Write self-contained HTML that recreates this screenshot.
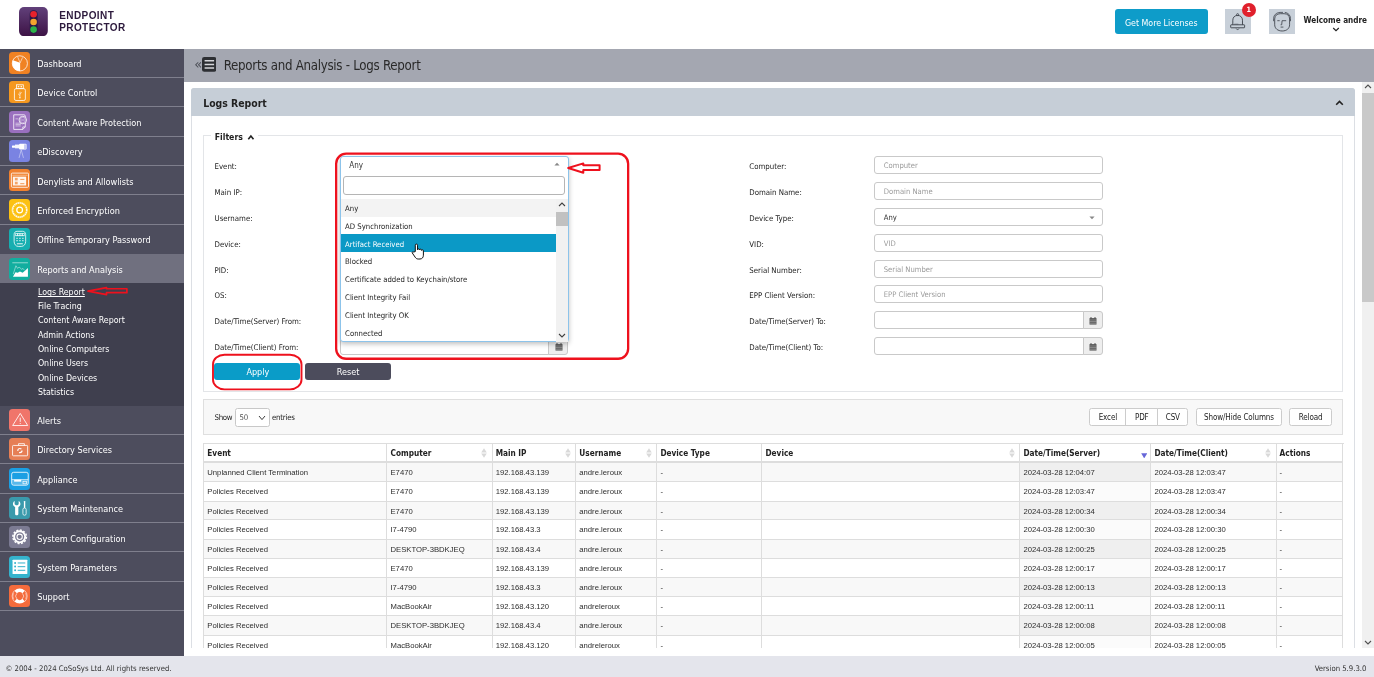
<!DOCTYPE html>
<html lang="en"><head><meta charset="utf-8"><title>Endpoint Protector - Reports and Analysis - Logs Report</title>
<style>
*{box-sizing:border-box;margin:0;padding:0}
html,body{width:1374px;height:677px;overflow:hidden;background:#fff}
body{position:relative;font-family:"DejaVu Sans Condensed","Liberation Sans",sans-serif;font-size:8px;color:#222;line-height:1}
.a{position:absolute}
.t{position:absolute;white-space:nowrap}
#hdr{left:0;top:0;width:1374px;height:48.5px;background:#fff}
#sb{left:0;top:48.5px;width:184px;height:607.2px;background:#4d4d5d;overflow:hidden}
.mi{position:absolute;left:0;width:184px;height:29.39px;border-bottom:1px solid #7f7f8d}
.mi.act{background:#70707f;border-bottom:0}
.mi.nb{border-bottom-color:#4d4d5d}
.mi svg{position:absolute;left:8.5px;top:3.4px;width:21.7px;height:22px;border-radius:3.5px}
.mi span{position:absolute;left:37.2px;top:11.6px;font-size:9.1px;color:#fff;white-space:nowrap}
#sub{position:absolute;left:0;top:283px;width:184px;height:122.5px;background:#3f3f4e}
#sub div{position:absolute;left:37.9px;font-size:8.8px;color:#fff;white-space:nowrap}
#tb{left:184px;top:48.5px;width:1190px;height:33.5px;background:#a4a7b1}
#ft{left:0;top:655.7px;width:1374px;height:21.3px;background:#e4e5ec}
#scr{left:1362px;top:82px;width:12px;height:566.3px;background:#f0f0f0}
#panel{left:191px;top:88.3px;width:1164.4px;height:580px;border:1px solid #dcdfe4;border-radius:3px 3px 0 0;background:#fff}
#ph{left:191px;top:88.3px;width:1164.4px;height:27.7px;background:#c6ced7;border-radius:3px 3px 0 0}
#fs{left:203px;top:135.3px;width:1140px;height:257px;border:1px solid #e3e5e8}
.lb{position:absolute;font-size:7.8px;color:#222;white-space:nowrap}
.in{position:absolute;height:18px;border:1px solid #c9c9c9;border-radius:3px;background:#fff;font-size:7.6px;color:#9a9a9a;padding:5px 0 0 8.4px;white-space:nowrap}
.addon{position:absolute;width:19.4px;height:18px;border:1px solid #c9c9c9;border-radius:0 3px 3px 0;background:#eee}
.btn{position:absolute;border:1px solid #ccc;background:#fff;font-size:8px;letter-spacing:-.12px;color:#222;text-align:center;height:18.4px;padding-top:5px;white-space:nowrap}
#tbl{left:203.3px;top:443px;width:1140.4px;height:205.3px;overflow:hidden;border-left:1px solid #ddd;border-top:1px solid #ddd}
.row{position:absolute;left:0;width:1139px;height:19.2px;border-bottom:1px solid #ddd}
.row i{font-family:"Liberation Sans",sans-serif;position:absolute;top:0;height:100%;border-right:1px solid #ddd;font-style:normal;font-size:7.7px;color:#2c2c2c;padding:6.2px 0 0 3px;white-space:nowrap;overflow:hidden}
.row.h i{font-family:"DejaVu Sans Condensed","Liberation Sans",sans-serif;font-weight:bold;font-size:8.2px;color:#222;padding-top:5.4px}
.row.o{background:#f8f8f8}
.opt{position:absolute;left:0;width:215.5px;height:17.9px;font-size:7.7px;color:#222;padding:6.1px 0 0 4.2px;white-space:nowrap}
#wrap{position:absolute;left:0;top:0;width:1374px;height:677px;overflow:hidden;will-change:transform}
</style></head><body><div id="wrap">

<div class="a" id="hdr">
<svg class="a" style="left:19.1px;top:6.8px" width="28.8" height="29.1" viewBox="0 0 28.8 29.1"><defs><linearGradient id="lg" x1="0" y1="0" x2="0" y2="1"><stop offset="0" stop-color="#61407a"/><stop offset="1" stop-color="#3d1345"/></linearGradient></defs><rect width="28.8" height="29.1" rx="5" fill="url(#lg)"/><rect x="10.7" y="3.2" width="7.9" height="23.1" rx="3.9" fill="#2a1848"/><circle cx="14.6" cy="7.3" r="3.3" fill="#e8222c"/><circle cx="14.6" cy="15" r="3.3" fill="#f5a52e"/><circle cx="14.6" cy="22.6" r="3.3" fill="#2db34a"/></svg>
<div class="t" style="left:59.2px;top:10.2px;font-family:'Liberation Sans',sans-serif;font-weight:bold;font-size:10px;letter-spacing:.42px;line-height:11.9px;color:#2d1a3d">ENDPOINT<br>PROTECTOR</div>
<div class="a" style="left:1114.5px;top:9.2px;width:93.5px;height:25.2px;background:#0e9cc9;border-radius:3px;color:#fff;font-size:8.8px;text-align:center;padding-top:9.6px">Get More Licenses</div>
<div class="a" style="left:1225px;top:8.7px;width:25.8px;height:25.2px;background:#c8d0d9"></div>
<svg class="a" style="left:1225px;top:8.7px" width="25.8" height="25.2" viewBox="0 0 25.8 25.2"><path d="M7.8 15.8v-4.6c0-2.9 2-4.8 4.8-4.8s4.9 1.9 4.9 4.8v4.6" fill="none" stroke="#3a3f47" stroke-width=".9"/><rect x="5.7" y="15.8" width="13.9" height="3" rx=".5" fill="none" stroke="#3a3f47" stroke-width=".9"/><circle cx="12.6" cy="5.6" r="1" fill="none" stroke="#3a3f47" stroke-width=".8"/><path d="M11.2 19.6a1.5 1.5 0 0 0 2.8 0" fill="none" stroke="#3a3f47" stroke-width=".8"/><path d="M9.2 15.1h4.2" stroke="#3a3f47" stroke-width=".7" opacity=".6"/></svg>
<div class="a" style="left:1241.7px;top:2.6px;width:14px;height:14px;border-radius:50%;background:#e0202c;color:#fff;font-size:7.2px;font-weight:bold;text-align:center;padding-top:3.4px">1</div>
<div class="a" style="left:1269.4px;top:8.7px;width:25.6px;height:25.2px;background:#c8d0d9"></div>
<svg class="a" style="left:1269.4px;top:8.7px" width="25.6" height="25.2" viewBox="0 0 25.6 25.2"><path d="M5.7 10c0-3.4 2.2-5.3 5.6-5.3h3.8c3.4 0 5.5 1.9 5.5 5.3v5.8c0 3.6-2.9 6.2-7.4 6.2s-7.5-2.6-7.5-6.2z" fill="none" stroke="#3a3f47" stroke-width=".85"/><path d="M4.6 12.2V9.6c0-3.4 2.6-6 6.4-6.2h3M15.8 3.4c3.4.4 5.7 2.8 5.7 6.2v2.6" fill="none" stroke="#3a3f47" stroke-width=".8"/><path d="M8.3 11.7h2.4M17.2 11.7h-4.1l-.4 4.1h-1.1M11.6 18.1h2.8" fill="none" stroke="#3a3f47" stroke-width=".8"/></svg>
<div class="t" style="left:1303.6px;top:15.9px;font-weight:bold;font-size:8.1px;color:#222">Welcome andre</div>
<svg class="a" style="left:1331.8px;top:27px" width="8" height="5" viewBox="0 0 8 5"><path d="M1.2 1l2.8 2.7L6.8 1" fill="none" stroke="#222" stroke-width="1.15"/></svg>
</div>
<div class="a" id="sb">
<div class="mi" style="top:0px"><svg viewBox="0 0 22 22" style="background:#f08223"><circle cx="11" cy="11.4" r="7.7" fill="none" stroke="#fff" stroke-width=".75"/><path d="M11.3 10.8L3.95 8.3A7.7 7.7 0 0 0 11.3 19.1Z" fill="#fff"/><path d="M11.3 10.8L8.8 4.9M11.3 10.8L13.8 5.3" stroke="#fff" stroke-width=".6"/></svg><span>Dashboard</span></div>
<div class="mi" style="top:29.4px"><svg viewBox="0 0 22 22" style="background:#f5981f"><rect x="7.6" y="3.7" width="6.9" height="3.9" fill="none" stroke="#fff" stroke-width=".8"/><rect x="8.9" y="4.8" width="1.5" height="1.5" fill="#fff" opacity=".85"/><rect x="11.7" y="4.8" width="1.5" height="1.5" fill="#fff" opacity=".85"/><rect x="5.5" y="7.6" width="11.1" height="12" rx="1.6" fill="none" stroke="#fff" stroke-width=".8"/><path d="M11.1 10.6v6M11.1 13.2l1.3-1.1v-.9M11.1 14.6l-1.3-1v-.9" stroke="#fff" stroke-width=".6" fill="none"/><circle cx="11.1" cy="16.8" r=".7" fill="#fff"/></svg><span>Device Control</span></div>
<div class="mi" style="top:58.8px"><svg viewBox="0 0 22 22" style="background:#9a70bf"><path d="M4.8 3.7h10.4c.8 0 1.3.5 1.3 1.3v11l-2.5 2.5H4.8z" fill="none" stroke="#fff" stroke-width=".8" stroke-linejoin="round"/><path d="M14 18.5v-2.5h2.5" fill="none" stroke="#fff" stroke-width=".7"/><circle cx="14" cy="9" r="3.8" fill="#9a70bf" stroke="#fff" stroke-width=".8"/><circle cx="14" cy="9" r="2.7" fill="none" stroke="#fff" stroke-width=".45" opacity=".8"/><path d="M12.3 9h3.4" stroke="#fff" stroke-width=".6" opacity=".8"/><path d="M6.6 7.8h3M6.6 12.2h5.4M6.6 13.6h5.4M6.6 15h5.4" stroke="#fff" stroke-width=".6" opacity=".85"/></svg><span>Content Aware Protection</span></div>
<div class="mi" style="top:88.2px"><svg viewBox="0 0 22 22" style="background:#7a83e2"><rect x="10.2" y="3.6" width="7.6" height="5.9" rx="1" fill="#fff"/><rect x="15.6" y="4.1" width="1.3" height="4.9" rx=".6" fill="#aab0ee"/><rect x="6.1" y="4.5" width="4.3" height="3.8" fill="#fff" opacity=".92"/><rect x="3" y="5.4" width="3.3" height="2.3" rx=".5" fill="#fff"/><path d="M12.4 9.8L10.2 18M12.4 9.8L14.7 18" stroke="#fff" stroke-width=".55" opacity=".8"/></svg><span>eDiscovery</span></div>
<div class="mi" style="top:117.6px"><svg viewBox="0 0 22 22" style="background:#f0812f"><rect x="2.4" y="4" width="17.4" height="14.4" rx="1" fill="none" stroke="#fff" stroke-width=".85"/><path d="M3.4 6.2h15.4" stroke="#fff" stroke-width=".6" opacity=".7"/><rect x="3.9" y="7.6" width="13.5" height="9" fill="#fff" opacity=".92"/><g fill="#f0812f"><rect x="6" y="8.8" width="2.8" height="2.6" opacity=".7"/><rect x="6" y="12.8" width="2.8" height="2.6" opacity=".7"/><rect x="11.4" y="9.9" width="4.2" height=".8"/><rect x="11.4" y="14.4" width="4.2" height=".8"/></g></svg><span>Denylists and Allowlists</span></div>
<div class="mi" style="top:146.9px"><svg viewBox="0 0 22 22" style="background:#fcc112"><circle cx="10.8" cy="11" r="7.1" fill="none" stroke="#fff" stroke-width="1.5" stroke-dasharray="1.5 .45" opacity=".9"/><circle cx="10.8" cy="11" r="7.9" fill="none" stroke="#fff" stroke-width=".4" opacity=".8"/><circle cx="10.8" cy="11" r="2.9" fill="none" stroke="#fff" stroke-width="1.3"/></svg><span>Enforced Encryption</span></div>
<div class="mi nb" style="top:176.3px"><svg viewBox="0 0 22 22" style="background:#16aeb0"><path d="M8.2 3.2h5.6c1.8 0 3.1 1.3 3.1 3.1v7.2c0 2.6-1.7 5-4.3 5h-3.2c-2.6 0-4.2-2.4-4.2-5V6.3c0-1.8 1.2-3.1 3-3.1z" fill="none" stroke="#fff" stroke-width=".8"/><rect x="6.4" y="5" width="9.4" height="3.1" fill="#fff" opacity=".95"/><path d="M7 6.5h8.3" stroke="#16aeb0" stroke-width="1.4" stroke-dasharray="1.3 1"/><path d="M7.3 10.4h7.6M7.3 12.6h7.6" stroke="#fff" stroke-width="1.3" stroke-dasharray="1.7 1.25" opacity=".6"/><path d="M8 15.8h6" stroke="#fff" stroke-width="1.2" opacity=".75"/></svg><span>Offline Temporary Password</span></div>
<div class="mi act" style="top:205.7px"><svg viewBox="0 0 22 22" style="background:#12ae9f"><path d="M3.4 4.7h15.8" stroke="#fff" stroke-width=".6" opacity=".9"/><path d="M4 18.9L6.6 14.4l2.2.5 2.3-1.4 2.7 1.4 2.7-2.3 2.7-2.7v9z" fill="#fff"/><path d="M4.3 16.2L7 7.7l1.8 2.7 1.4-1.4 2.7 2.3 1.3-.9 1.4 1.8" stroke="#fff" stroke-width=".5" fill="none" opacity=".9"/></svg><span>Reports and Analysis</span></div>
<div id="sub" style="top:234.5px">
<div style="top:4.8px;text-decoration:underline;text-decoration-skip-ink:none;text-underline-offset:1px;">Logs Report</div>
<div style="top:19.1px;">File Tracing</div>
<div style="top:33.4px;">Content Aware Report</div>
<div style="top:47.7px;">Admin Actions</div>
<div style="top:62px;">Online Computers</div>
<div style="top:76.3px;">Online Users</div>
<div style="top:90.6px;">Online Devices</div>
<div style="top:104.9px;">Statistics</div>
<svg class="a" style="left:85px;top:1.1px" width="46" height="14" viewBox="0 0 46 14"><path d="M3 7.1L21.5 3.55v1.2h20.4v3.9H21.5v2z" fill="none" stroke="#ee111d" stroke-width="1.7" stroke-linejoin="round"/></svg>
</div>
<div class="mi" style="top:357px"><svg viewBox="0 0 22 22" style="background:#f0756a"><path d="M11.4 4.3L19 16.6H3.7z" fill="none" stroke="#fff" stroke-width=".85" stroke-linejoin="round"/><path d="M11.4 8.6v4.3" stroke="#fff" stroke-width=".9"/><circle cx="11.4" cy="14.5" r=".55" fill="#fff"/></svg><span>Alerts</span></div>
<div class="mi" style="top:386.4px"><svg viewBox="0 0 22 22" style="background:#e67f55"><rect x="3.6" y="7.4" width="15.3" height="10.5" rx=".8" fill="none" stroke="#fff" stroke-width=".85"/><path d="M9.7 7.4V5.6h5.9v1.8" fill="none" stroke="#fff" stroke-width=".85"/><circle cx="11.1" cy="12.6" r="2.1" fill="none" stroke="#fff" stroke-width="1.2" stroke-dasharray="4.8 1.8" stroke-dashoffset="1"/></svg><span>Directory Services</span></div>
<div class="mi" style="top:415.8px"><svg viewBox="0 0 22 22" style="background:#1b9fe3"><rect x="2.7" y="4.2" width="16.8" height="13.1" rx="2" fill="none" stroke="#fff" stroke-width=".85"/><path d="M3.1 11.65h16v4.2q0 1.05-1.05 1.05H4.15Q3.1 16.9 3.1 15.85z" fill="#fff" opacity=".28"/><path d="M2.7 11.6h16.8" stroke="#fff" stroke-width=".7"/><rect x="5.2" y="11.7" width="7.2" height="2" fill="#fff"/><rect x="14.2" y="13.3" width="3.4" height="2.6" fill="none" stroke="#fff" stroke-width=".7"/></svg><span>Appliance</span></div>
<div class="mi" style="top:445.2px"><svg viewBox="0 0 22 22" style="background:#3a9aac"><path d="M5.7 3.9v3.3l1.4.9h1.4l1.3-.9V3.9c1.2.7 1.8 1.8 1.8 3.1 0 1.5-.9 2.5-2.1 3v7c0 .8-.7 1.4-1.7 1.4s-1.6-.6-1.6-1.4v-7c-1.2-.5-2.2-1.5-2.2-3 0-1.3.6-2.4 1.7-3.1z" fill="#fff"/><rect x="15.1" y="4" width="1.4" height="7" rx=".5" fill="#fff"/><rect x="14.1" y="11" width="3.3" height="7.3" rx="1.5" fill="none" stroke="#fff" stroke-width=".8"/></svg><span>System Maintenance</span></div>
<div class="mi" style="top:474.6px"><svg viewBox="0 0 22 22" style="background:#7c7b93"><circle cx="10.8" cy="10.8" r="6.9" fill="none" stroke="#fff" stroke-width="1.5" stroke-dasharray="2.1 1.51"/><circle cx="10.8" cy="10.8" r="5.6" fill="none" stroke="#fff" stroke-width="1.9"/><circle cx="10.8" cy="10.8" r="2.7" fill="none" stroke="#fff" stroke-width="1.1"/></svg><span>System Configuration</span></div>
<div class="mi" style="top:504px"><svg viewBox="0 0 22 22" style="background:#35b3cd"><rect x="3.6" y="3.6" width="15" height="14.6" rx=".6" fill="#fff"/><g fill="#35b3cd"><circle cx="6.2" cy="6.9" r="1"/><circle cx="6.2" cy="10.6" r="1"/><circle cx="6.2" cy="14.4" r="1"/><rect x="8.8" y="6.3" width="7.7" height="1.2" opacity=".85"/><rect x="8.8" y="10" width="7.7" height="1.2" opacity=".85"/><rect x="8.8" y="13.8" width="7.7" height="1.2" opacity=".85"/></g></svg><span>System Parameters</span></div>
<div class="mi" style="top:533.4px"><svg viewBox="0 0 22 22" style="background:#f46b3c"><path d="M5.5 5.6A7.7 7.7 0 0 1 16.1 5.6L13.6 8.3A4 4 0 0 0 8 8.3ZM5.5 16.6A7.7 7.7 0 0 0 16.1 16.6L13.6 13.9A4 4 0 0 1 8 13.9Z" fill="#fff"/><path d="M5.5 5.6A7.7 7.7 0 0 0 5.5 16.6M16.1 5.6A7.7 7.7 0 0 1 16.1 16.6M8 8.3A4 4 0 0 0 8 13.9M13.6 8.3A4 4 0 0 1 13.6 13.9" fill="none" stroke="#fff" stroke-width=".6"/><path d="M4.8 8A6.6 6.6 0 0 0 4.8 14.2M16.8 8A6.6 6.6 0 0 1 16.8 14.2" fill="none" stroke="#fff" stroke-width=".5" opacity=".8"/></svg><span>Support</span></div>
</div>
<div class="a" id="tb"></div>
<div class="t" style="left:194.2px;top:56.9px;font-size:14.5px;color:#4a4d55">&laquo;</div>
<svg class="a" style="left:202px;top:57px" width="14.4" height="14.7" viewBox="0 0 14.4 14.7"><rect width="14.4" height="14.7" rx="2.2" fill="#2d2f33"/><path d="M2.6 3.85h9.5M2.6 7.4h9.5M2.6 11.1h9.5" stroke="#d5d6da" stroke-width="1.5"/></svg>
<div class="t" style="left:223.7px;top:59px;font-size:13.2px;letter-spacing:-.28px;color:#2a2a2a">Reports and Analysis - Logs Report</div>
<div class="a" id="scr"><svg class="a" style="left:2px;top:2px" width="8" height="5" viewBox="0 0 8 5"><path d="M1 4l3-3 3 3" fill="none" stroke="#505050" stroke-width="1.1"/></svg><div class="a" style="left:0;top:11px;width:12px;height:208.5px;background:#c9c9c9"></div><svg class="a" style="left:2px;top:557.5px" width="8" height="5" viewBox="0 0 8 5"><path d="M1 1l3 3 3-3" fill="none" stroke="#505050" stroke-width="1.1"/></svg></div>
<div class="a" id="panel"></div><div class="a" id="ph"></div>
<div class="t" style="left:203.2px;top:97.8px;font-weight:bold;font-size:10.4px;color:#222">Logs Report</div>
<svg class="a" style="left:1334.5px;top:100px" width="9" height="6" viewBox="0 0 9 6"><path d="M1.2 4.8l3.3-3.3 3.3 3.3" fill="none" stroke="#222" stroke-width="1.6"/></svg>
<div class="a" id="fs"></div>
<div class="a" style="left:211px;top:130px;width:46.5px;height:12px;background:#fff"></div>
<div class="t" style="left:214.7px;top:132.6px;font-weight:bold;font-size:8.7px;color:#222">Filters</div>
<svg class="a" style="left:246.6px;top:133.6px" width="8" height="6.5" viewBox="0 0 8 6.5"><path d="M1.3 5.3l2.6-3.3 2.6 3.3" fill="none" stroke="#222" stroke-width="1.6"/></svg>
<div class="lb" style="left:214.5px;top:163px">Event:</div>
<div class="lb" style="left:214.5px;top:189px">Main IP:</div>
<div class="lb" style="left:214.5px;top:215px">Username:</div>
<div class="lb" style="left:214.5px;top:241px">Device:</div>
<div class="lb" style="left:214.5px;top:267px">PID:</div>
<div class="lb" style="left:214.5px;top:292px">OS:</div>
<div class="lb" style="left:214.5px;top:318px">Date/Time(Server) From:</div>
<div class="lb" style="left:214.5px;top:344px">Date/Time(Client) From:</div>
<div class="lb" style="left:749.3px;top:163px">Computer:</div>
<div class="in" style="left:874.4px;top:156px;width:228.3px;">Computer</div>
<div class="lb" style="left:749.3px;top:189px">Domain Name:</div>
<div class="in" style="left:874.4px;top:182px;width:228.3px;">Domain Name</div>
<div class="lb" style="left:749.3px;top:215px">Device Type:</div>
<div class="in" style="left:874.4px;top:208px;width:228.3px;color:#333;">Any</div>
<svg class="a" style="left:1088.5px;top:215.8px" width="6" height="4" viewBox="0 0 6 4"><path d="M.4.5h5.2L3 3.3z" fill="#888"/></svg>
<div class="lb" style="left:749.3px;top:241px">VID:</div>
<div class="in" style="left:874.4px;top:234px;width:228.3px;">VID</div>
<div class="lb" style="left:749.3px;top:267px">Serial Number:</div>
<div class="in" style="left:874.4px;top:260px;width:228.3px;">Serial Number</div>
<div class="lb" style="left:749.3px;top:292px">EPP Client Version:</div>
<div class="in" style="left:874.4px;top:285px;width:228.3px;">EPP Client Version</div>
<div class="lb" style="left:749.3px;top:318px">Date/Time(Server) To:</div>
<div class="in" style="left:874.4px;top:311px;width:209.9px;border-radius:3px 0 0 3px"></div>
<div class="addon" style="left:1083.3px;top:311px"><svg class="a" style="left:5px;top:4.5px" width="8" height="8" viewBox="0 0 8 8"><path d="M.5 1.2h7v6.3h-7z" fill="#444"/><path d="M.5 3h7M.5 4.7h7M.5 6.2h7" stroke="#eee" stroke-width=".5"/><path d="M2 0v1.5M6 0v1.5" stroke="#444" stroke-width=".9"/></svg></div>
<div class="lb" style="left:749.3px;top:344px">Date/Time(Client) To:</div>
<div class="in" style="left:874.4px;top:337px;width:209.9px;border-radius:3px 0 0 3px"></div>
<div class="addon" style="left:1083.3px;top:337px"><svg class="a" style="left:5px;top:4.5px" width="8" height="8" viewBox="0 0 8 8"><path d="M.5 1.2h7v6.3h-7z" fill="#444"/><path d="M.5 3h7M.5 4.7h7M.5 6.2h7" stroke="#eee" stroke-width=".5"/><path d="M2 0v1.5M6 0v1.5" stroke="#444" stroke-width=".9"/></svg></div>
<div class="in" style="left:339.9px;top:337px;width:209px;border-radius:3px 0 0 3px"></div>
<div class="addon" style="left:548.3px;top:337px;width:20px"><svg class="a" style="left:5.5px;top:4.5px" width="8" height="8" viewBox="0 0 8 8"><path d="M.5 1.2h7v6.3h-7z" fill="#444"/><path d="M.5 3h7M.5 4.7h7M.5 6.2h7" stroke="#eee" stroke-width=".5"/><path d="M2 0v1.5M6 0v1.5" stroke="#444" stroke-width=".9"/></svg></div>
<div class="a" style="left:339.9px;top:156px;width:229.4px;height:186px;background:#fff;border:1px solid #8cc3ea;border-radius:3px;box-shadow:0 2px 5px rgba(0,0,0,.25)">
<div class="t" style="left:8.4px;top:5.4px;font-size:8px;color:#333">Any</div>
<svg class="a" style="left:213px;top:5.4px" width="6" height="4" viewBox="0 0 6 4"><path d="M.4 3.5h5.2L3 .7z" fill="#888"/></svg>
<div class="a" style="left:2.4px;top:18.9px;width:222.2px;height:19px;border:1px solid #b5b5b5;border-radius:3px;background:#fff"></div>
<div class="a" style="left:0;top:41.8px;width:227.4px;height:143px;overflow:hidden">
<div class="opt" style="top:0px;background:#f3f3f3;">Any</div>
<div class="opt" style="top:17.85px;">AD Synchronization</div>
<div class="opt" style="top:35.7px;background:#0b99c6;color:#fff;">Artifact Received</div>
<div class="opt" style="top:53.55px;">Blocked</div>
<div class="opt" style="top:71.4px;">Certificate added to Keychain/store</div>
<div class="opt" style="top:89.25px;">Client Integrity Fail</div>
<div class="opt" style="top:107.1px;">Client Integrity OK</div>
<div class="opt" style="top:124.95px;">Connected</div>
<div class="a" style="left:215.5px;top:0;width:12px;height:143px;background:#f1f1f1"><svg class="a" style="left:2px;top:3.5px" width="8" height="5" viewBox="0 0 8 5"><path d="M1 4l3-3 3 3" fill="none" stroke="#404040" stroke-width="1.1"/></svg><div class="a" style="left:0;top:13px;width:12px;height:14px;background:#c1c1c1"></div><svg class="a" style="left:2px;top:134.5px" width="8" height="5" viewBox="0 0 8 5"><path d="M1 1l3 3 3-3" fill="none" stroke="#404040" stroke-width="1.1"/></svg></div>
</div></div>
<svg class="a" style="left:411px;top:242.5px" width="14" height="17" viewBox="0 0 14 17"><path d="M4.3 8.6V2.2a1.1 1.1 0 0 1 2.2 0v4.6a1 1 0 0 1 2 .2 1 1 0 0 1 2 .4 1 1 0 0 1 1.9.5v4.3c0 2.2-1.3 3.8-3.4 3.8H7.2c-1.5 0-2.3-.7-3.1-1.9L1.3 10c-.5-.9.5-1.7 1.3-1z" fill="#fff" stroke="#111" stroke-width="1" stroke-linejoin="round"/></svg>
<svg class="a" style="left:330px;top:148px" width="304" height="216" viewBox="0 0 304 216"><rect x="6.15" y="5.65" width="292" height="205.1" rx="10" fill="none" stroke="#ee111d" stroke-width="2.3"/></svg>
<svg class="a" style="left:565px;top:160px" width="38" height="15" viewBox="0 0 38 15"><path d="M3.2 8.05L18.3 3.4v1.8h16.3v4.9H18.3v2.6z" fill="#fff" stroke="#ee111d" stroke-width="2" stroke-linejoin="round"/></svg>
<svg class="a" style="left:208px;top:350px" width="98" height="44" viewBox="0 0 98 44"><rect x="5" y="4.75" width="88.5" height="34.6" rx="11.5" ry="9.5" fill="none" stroke="#ee111d" stroke-width="1.9"/></svg>
<div class="a" style="left:214.3px;top:363.4px;width:85.8px;height:16.6px;padding-left:1.3px;background:#0a9cc8;border-radius:3px;color:#fff;font-size:9px;text-align:center;padding-top:4.6px">Apply</div>
<div class="a" style="left:305.3px;top:363.4px;width:85.7px;height:16.6px;background:#4c4c5c;border-radius:3px;color:#fff;font-size:9px;text-align:center;padding-top:4.6px">Reset</div>
<div class="a" style="left:203.3px;top:399.4px;width:1139.4px;height:35.2px;background:#f8f8f8;border:1px solid #dfdfdf"></div>
<div class="lb" style="left:214.5px;top:413.8px;letter-spacing:-.3px">Show</div>
<div class="a" style="left:235.4px;top:408.4px;width:34.3px;height:18.6px;border:1px solid #c8c8c8;border-radius:2.5px;background:#fff"></div>
<div class="lb" style="left:239.4px;top:414.2px;font-size:7.8px;color:#555">50</div>
<svg class="a" style="left:258.2px;top:414.8px" width="8" height="6" viewBox="0 0 8 6"><path d="M1 1l3 3.6L7 1" fill="none" stroke="#333" stroke-width=".95"/></svg>
<div class="lb" style="left:271.9px;top:413.8px;letter-spacing:-.2px">entries</div>
<div class="btn" style="left:1089.4px;top:408px;width:37px;border-radius:2.5px 0 0 2.5px">Excel</div>
<div class="btn" style="left:1125.4px;top:408px;width:32.8px;border-radius:0">PDF</div>
<div class="btn" style="left:1157.2px;top:408px;width:31.3px;border-radius:0 2.5px 2.5px 0">CSV</div>
<div class="btn" style="left:1196.2px;top:408px;width:85.7px;border-radius:2.5px">Show/Hide Columns</div>
<div class="btn" style="left:1289.3px;top:408px;width:42.7px;border-radius:2.5px">Reload</div>
<div class="a" id="tbl">
<div class="row h" style="top:0;height:19px;border-bottom:2px solid #ddd">
<i style="left:0px;width:183.2px">Event</i>
<i style="left:183.2px;width:105.2px">Computer<svg class="a" style="left:93.8px;top:3.7px" width="6" height="10" viewBox="0 0 6 10"><path d="M.2 4.4h5.6L3 .3zM.2 5.6h5.6L3 9.7z" fill="#d9d9d9"/></svg></i>
<i style="left:288.4px;width:83.6px">Main IP<svg class="a" style="left:72.2px;top:3.7px" width="6" height="10" viewBox="0 0 6 10"><path d="M.2 4.4h5.6L3 .3zM.2 5.6h5.6L3 9.7z" fill="#d9d9d9"/></svg></i>
<i style="left:372px;width:81.1px">Username<svg class="a" style="left:69.7px;top:3.7px" width="6" height="10" viewBox="0 0 6 10"><path d="M.2 4.4h5.6L3 .3zM.2 5.6h5.6L3 9.7z" fill="#d9d9d9"/></svg></i>
<i style="left:453.1px;width:105.1px">Device Type</i>
<i style="left:558.2px;width:257.9px">Device<svg class="a" style="left:246.5px;top:3.7px" width="6" height="10" viewBox="0 0 6 10"><path d="M.2 4.4h5.6L3 .3zM.2 5.6h5.6L3 9.7z" fill="#d9d9d9"/></svg></i>
<i style="left:816.1px;width:131px">Date/Time(Server)<svg class="a" style="left:120.6px;top:8.9px" width="6.4" height="5.6" viewBox="0 0 6.4 5.6"><path d="M.2.3h6L3.2 5.4z" fill="#6767d8"/></svg></i>
<i style="left:947.1px;width:125.2px">Date/Time(Client)<svg class="a" style="left:113.8px;top:3.7px" width="6" height="10" viewBox="0 0 6 10"><path d="M.2 4.4h5.6L3 .3zM.2 5.6h5.6L3 9.7z" fill="#d9d9d9"/></svg></i>
<i style="left:1072.3px;width:66.7px">Actions</i>
</div>
<div class="row o" style="top:19px;height:19px">
<i style="left:0px;width:183.2px;">Unplanned Client Termination</i>
<i style="left:183.2px;width:105.2px;">E7470</i>
<i style="left:288.4px;width:83.6px;">192.168.43.139</i>
<i style="left:372px;width:81.1px;">andre.leroux</i>
<i style="left:453.1px;width:105.1px;">-</i>
<i style="left:558.2px;width:257.9px;"></i>
<i style="left:816.1px;width:131px;background:#efefef;">2024-03-28 12:04:07</i>
<i style="left:947.1px;width:125.2px;">2024-03-28 12:03:47</i>
<i style="left:1072.3px;width:66.7px;">-</i>
</div>
<div class="row" style="top:38px;height:20px">
<i style="left:0px;width:183.2px;">Policies Received</i>
<i style="left:183.2px;width:105.2px;">E7470</i>
<i style="left:288.4px;width:83.6px;">192.168.43.139</i>
<i style="left:372px;width:81.1px;">andre.leroux</i>
<i style="left:453.1px;width:105.1px;">-</i>
<i style="left:558.2px;width:257.9px;"></i>
<i style="left:816.1px;width:131px;background:#fbfbfb;">2024-03-28 12:03:47</i>
<i style="left:947.1px;width:125.2px;">2024-03-28 12:03:47</i>
<i style="left:1072.3px;width:66.7px;">-</i>
</div>
<div class="row o" style="top:58px;height:18px">
<i style="left:0px;width:183.2px;">Policies Received</i>
<i style="left:183.2px;width:105.2px;">E7470</i>
<i style="left:288.4px;width:83.6px;">192.168.43.139</i>
<i style="left:372px;width:81.1px;">andre.leroux</i>
<i style="left:453.1px;width:105.1px;">-</i>
<i style="left:558.2px;width:257.9px;"></i>
<i style="left:816.1px;width:131px;background:#efefef;">2024-03-28 12:00:34</i>
<i style="left:947.1px;width:125.2px;">2024-03-28 12:00:34</i>
<i style="left:1072.3px;width:66.7px;">-</i>
</div>
<div class="row" style="top:76px;height:20px">
<i style="left:0px;width:183.2px;">Policies Received</i>
<i style="left:183.2px;width:105.2px;">I7-4790</i>
<i style="left:288.4px;width:83.6px;">192.168.43.3</i>
<i style="left:372px;width:81.1px;">andre.leroux</i>
<i style="left:453.1px;width:105.1px;">-</i>
<i style="left:558.2px;width:257.9px;"></i>
<i style="left:816.1px;width:131px;background:#fbfbfb;">2024-03-28 12:00:30</i>
<i style="left:947.1px;width:125.2px;">2024-03-28 12:00:30</i>
<i style="left:1072.3px;width:66.7px;">-</i>
</div>
<div class="row o" style="top:96px;height:19px">
<i style="left:0px;width:183.2px;">Policies Received</i>
<i style="left:183.2px;width:105.2px;">DESKTOP-3BDKJEQ</i>
<i style="left:288.4px;width:83.6px;">192.168.43.4</i>
<i style="left:372px;width:81.1px;">andre.leroux</i>
<i style="left:453.1px;width:105.1px;">-</i>
<i style="left:558.2px;width:257.9px;"></i>
<i style="left:816.1px;width:131px;background:#efefef;">2024-03-28 12:00:25</i>
<i style="left:947.1px;width:125.2px;">2024-03-28 12:00:25</i>
<i style="left:1072.3px;width:66.7px;">-</i>
</div>
<div class="row" style="top:115px;height:19px">
<i style="left:0px;width:183.2px;">Policies Received</i>
<i style="left:183.2px;width:105.2px;">E7470</i>
<i style="left:288.4px;width:83.6px;">192.168.43.139</i>
<i style="left:372px;width:81.1px;">andre.leroux</i>
<i style="left:453.1px;width:105.1px;">-</i>
<i style="left:558.2px;width:257.9px;"></i>
<i style="left:816.1px;width:131px;background:#fbfbfb;">2024-03-28 12:00:17</i>
<i style="left:947.1px;width:125.2px;">2024-03-28 12:00:17</i>
<i style="left:1072.3px;width:66.7px;">-</i>
</div>
<div class="row o" style="top:134px;height:19px">
<i style="left:0px;width:183.2px;">Policies Received</i>
<i style="left:183.2px;width:105.2px;">I7-4790</i>
<i style="left:288.4px;width:83.6px;">192.168.43.3</i>
<i style="left:372px;width:81.1px;">andre.leroux</i>
<i style="left:453.1px;width:105.1px;">-</i>
<i style="left:558.2px;width:257.9px;"></i>
<i style="left:816.1px;width:131px;background:#efefef;">2024-03-28 12:00:13</i>
<i style="left:947.1px;width:125.2px;">2024-03-28 12:00:13</i>
<i style="left:1072.3px;width:66.7px;">-</i>
</div>
<div class="row" style="top:153px;height:19px">
<i style="left:0px;width:183.2px;">Policies Received</i>
<i style="left:183.2px;width:105.2px;">MacBookAir</i>
<i style="left:288.4px;width:83.6px;">192.168.43.120</i>
<i style="left:372px;width:81.1px;">andreleroux</i>
<i style="left:453.1px;width:105.1px;">-</i>
<i style="left:558.2px;width:257.9px;"></i>
<i style="left:816.1px;width:131px;background:#fbfbfb;">2024-03-28 12:00:11</i>
<i style="left:947.1px;width:125.2px;">2024-03-28 12:00:11</i>
<i style="left:1072.3px;width:66.7px;">-</i>
</div>
<div class="row o" style="top:172px;height:20px">
<i style="left:0px;width:183.2px;">Policies Received</i>
<i style="left:183.2px;width:105.2px;">DESKTOP-3BDKJEQ</i>
<i style="left:288.4px;width:83.6px;">192.168.43.4</i>
<i style="left:372px;width:81.1px;">andre.leroux</i>
<i style="left:453.1px;width:105.1px;">-</i>
<i style="left:558.2px;width:257.9px;"></i>
<i style="left:816.1px;width:131px;background:#efefef;">2024-03-28 12:00:08</i>
<i style="left:947.1px;width:125.2px;">2024-03-28 12:00:08</i>
<i style="left:1072.3px;width:66.7px;">-</i>
</div>
<div class="row" style="top:192px;height:20px">
<i style="left:0px;width:183.2px;">Policies Received</i>
<i style="left:183.2px;width:105.2px;">MacBookAir</i>
<i style="left:288.4px;width:83.6px;">192.168.43.120</i>
<i style="left:372px;width:81.1px;">andreleroux</i>
<i style="left:453.1px;width:105.1px;">-</i>
<i style="left:558.2px;width:257.9px;"></i>
<i style="left:816.1px;width:131px;background:#fbfbfb;">2024-03-28 12:00:05</i>
<i style="left:947.1px;width:125.2px;">2024-03-28 12:00:05</i>
<i style="left:1072.3px;width:66.7px;">-</i>
</div>
</div>
<div class="a" style="left:184px;top:648.3px;width:1190px;height:7.4px;background:#fff"></div>
<div class="a" id="ft"></div>
<div class="t" style="left:5.4px;top:664.6px;font-size:7.7px;color:#333">&copy; 2004 - 2024 CoSoSys Ltd. All rights reserved.</div>
<div class="t" style="right:7.6px;top:664.6px;font-size:7.7px;color:#333">Version 5.9.3.0</div>
</div></body></html>
